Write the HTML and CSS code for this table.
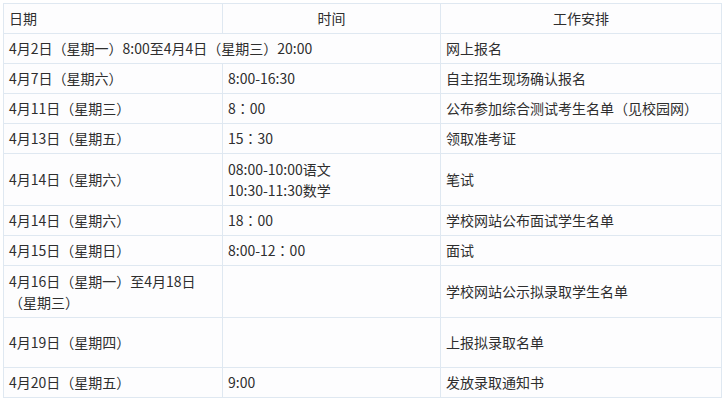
FILE: index.html
```html
<!DOCTYPE html>
<html lang="zh-CN">
<head>
<meta charset="utf-8">
<link rel="stylesheet" href="styles.css">
</head>
<body>
<div class="wrap">
<table class="sched">
  <colgroup>
    <col class="c1"><col class="c2"><col class="c3">
  </colgroup>
  <thead>
    <tr class="r30">
      <th class="left">日期</th>
      <th>时间</th>
      <th>工作安排</th>
    </tr>
  </thead>
  <tbody>
    <tr class="r30"><td colspan="2">4月2日<span class="p">（</span>星期一<span class="p">）</span>8:00至4月4日<span class="p">（</span>星期三<span class="p">）</span>20:00</td><td>网上报名</td></tr>
    <tr class="r30"><td>4月7日<span class="p">（</span>星期六<span class="p">）</span></td><td>8:00-16:30</td><td>自主招生现场确认报名</td></tr>
    <tr class="r30"><td>4月11日<span class="p">（</span>星期三<span class="p">）</span></td><td>8<span class="p">：</span>00</td><td>公布参加综合测试考生名单<span class="p">（</span>见校园网<span class="p">）</span></td></tr>
    <tr class="r30"><td>4月13日<span class="p">（</span>星期五<span class="p">）</span></td><td>15<span class="p">：</span>30</td><td>领取准考证</td></tr>
    <tr class="r52"><td>4月14日<span class="p">（</span>星期六<span class="p">）</span></td><td>08:00-10:00语文<br>10:30-11:30数学</td><td>笔试</td></tr>
    <tr class="r30"><td>4月14日<span class="p">（</span>星期六<span class="p">）</span></td><td>18<span class="p">：</span>00</td><td>学校网站公布面试学生名单</td></tr>
    <tr class="r30"><td>4月15日<span class="p">（</span>星期日<span class="p">）</span></td><td>8:00-12<span class="p">：</span>00</td><td>面试</td></tr>
    <tr class="r52"><td>4月16日<span class="p">（</span>星期一<span class="p">）</span>至4月18日<span class="p">（</span>星期三<span class="p">）</span></td><td></td><td>学校网站公示拟录取学生名单</td></tr>
    <tr class="r50"><td>4月19日<span class="p">（</span>星期四<span class="p">）</span></td><td></td><td>上报拟录取名单</td></tr>
    <tr class="r30"><td>4月20日<span class="p">（</span>星期五<span class="p">）</span></td><td>9:00</td><td>发放录取通知书</td></tr>
  </tbody>
</table>
</div>
</body>
</html>
```

FILE: styles.css
```css
html, body {
  margin: 0;
  padding: 0;
  background: #ffffff;
}
.wrap {
  padding: 3px 0 0 3px;
}
.sched {
  border-collapse: collapse;
  table-layout: fixed;
  width: 718px;
  font-family: "Noto Sans CJK SC", "Microsoft YaHei", sans-serif;
  font-size: 14px;
  line-height: 21px;
  color: #2e2e2e;
  background: #fdfdfe;
}
.c1 { width: 219px; }
.c2 { width: 218px; }
.c3 { width: 281px; }
.sched th,
.sched td {
  border: 1px solid #dfe8f1;
  padding: 0 5px;
  vertical-align: middle;
  text-align: left;
  font-weight: normal;
  overflow: hidden;
}
.sched th { text-align: center; }
.sched th.left { text-align: left; }
.p {
  font-family: "Noto Sans CJK TC", "Noto Sans CJK SC", sans-serif;
}
.r30 { height: 30px; }
.r52 { height: 52px; }
.r50 { height: 50px; }
```
